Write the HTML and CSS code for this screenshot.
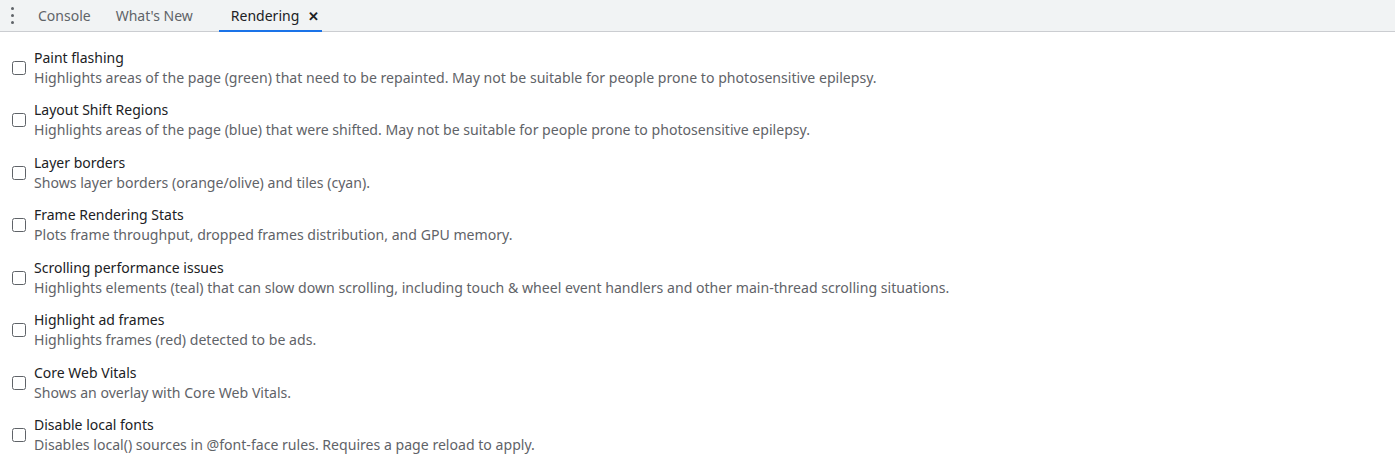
FILE: index.html
```html
<!DOCTYPE html>
<html>
<head>
<meta charset="utf-8">
<link rel="stylesheet" href="styles.css">
</head>
<body>
<div class="tabbar">
  <div class="menu"><span></span><span></span><span></span></div>
  <div class="tab">Console</div>
  <div class="tab spaced">What's New</div>
  <div class="tab active">Rendering <span class="close">✕</span></div>
</div>
<div class="list">
  <label class="row"><span class="cb"></span><div class="txt"><div class="title">Paint flashing</div><div class="desc">Highlights areas of the page (green) that need to be repainted. May not be suitable for people prone to photosensitive epilepsy.</div></div></label>
  <label class="row"><span class="cb"></span><div class="txt"><div class="title">Layout Shift Regions</div><div class="desc">Highlights areas of the page (blue) that were shifted. May not be suitable for people prone to photosensitive epilepsy.</div></div></label>
  <label class="row"><span class="cb"></span><div class="txt"><div class="title">Layer borders</div><div class="desc">Shows layer borders (orange/olive) and tiles (cyan).</div></div></label>
  <label class="row"><span class="cb"></span><div class="txt"><div class="title">Frame Rendering Stats</div><div class="desc">Plots frame throughput, dropped frames distribution, and GPU memory.</div></div></label>
  <label class="row"><span class="cb"></span><div class="txt"><div class="title">Scrolling performance issues</div><div class="desc">Highlights elements (teal) that can slow down scrolling, including touch &amp; wheel event handlers and other main-thread scrolling situations.</div></div></label>
  <label class="row"><span class="cb"></span><div class="txt"><div class="title">Highlight ad frames</div><div class="desc">Highlights frames (red) detected to be ads.</div></div></label>
  <label class="row"><span class="cb"></span><div class="txt"><div class="title">Core Web Vitals</div><div class="desc">Shows an overlay with Core Web Vitals.</div></div></label>
  <label class="row"><span class="cb"></span><div class="txt"><div class="title">Disable local fonts</div><div class="desc">Disables local() sources in @font-face rules. Requires a page reload to apply.</div></div></label>
</div>
</body>
</html>
```
FILE: styles.css
```css
html, body { margin: 0; padding: 0; background: #fff; }
body { font-family: "Noto Sans", "Open Sans", sans-serif; font-size: 14px; color: #202124; }
.tabbar { display: flex; align-items: stretch; height: 31px; background: #f1f3f4; border-bottom: 1px solid #cbcdd1; }
.menu { width: 24px; display: flex; flex-direction: column; align-items: center; justify-content: center; gap: 4px; }
.menu span { width: 3px; height: 3px; border-radius: 50%; background: #5f6368; }
.tab { display: flex; align-items: center; padding: 0 12px; color: #5f6368; font-size: 14px; }
.tab:nth-child(2) { padding-left: 14px; }
.tab.spaced { margin-right: 14px; padding-left: 13px; }
.tab.active { color: #202124; border-bottom: 2px solid #1a73e8; margin-bottom: -1px; padding: 1px 4px 0 12px; }
.close { font-size: 13px; margin-left: 9px; font-weight: bold; width: 10px; }
.list { display: flex; flex-direction: column; gap: 12.55px; padding-top: 15.5px; }
.row { display: flex; align-items: center; padding-left: 12px; }
.cb { box-sizing: border-box; width: 14px; height: 14px; border: 1px solid #5f6368; border-radius: 2.5px; margin-right: 8px; flex: none; }
.title { font-size: 14px; line-height: 20px; color: #202124; }
.desc { font-size: 14.1px; line-height: 20px; color: #5f6368; }
```
